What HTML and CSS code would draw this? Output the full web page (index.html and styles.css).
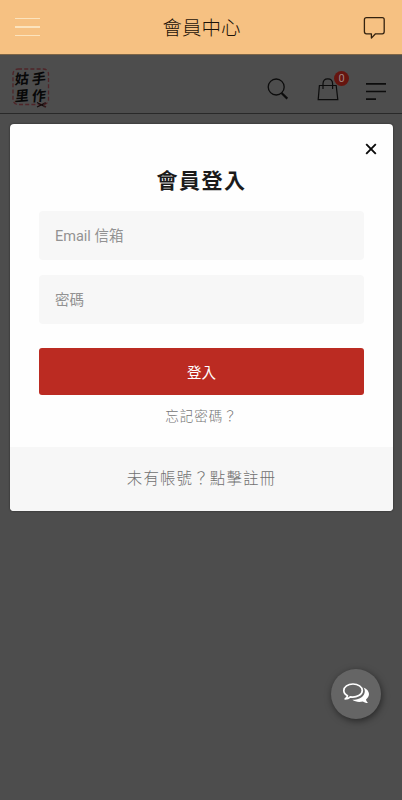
FILE: index.html
```html
<!DOCTYPE html>
<html lang="zh-Hant">
  <head>
    <meta charset="UTF-8" />
    <meta name="viewport" content="width=device-width, initial-scale=1.0" />
    <title>會員中心</title>
    <link rel="stylesheet" href="styles.css">
  </head>
  <body>
    <header class="app-bar">
      <button class="app-menu" aria-label="選單">
        <span></span>
        <span></span>
        <span></span>
      </button>
      <h1>會員中心</h1>
      <button class="app-message" aria-label="訊息">
        <svg width="24" height="24" viewBox="0 0 24 24" fill="none" stroke="#33220f" stroke-width="1.3" stroke-linejoin="round">
          <path d="M4 2.7H19.3Q21.2 2.7 21.2 4.6V16.4Q21.2 18.8 19.3 18.8H12.5L8.4 23.1V18.8H3.5Q1.4 18.8 1.4 16.4V4.8Q1.4 2.7 3.5 2.7Z" />
        </svg>
      </button>
    </header>

    <nav class="site-nav">
      <a class="logo" href="#">
        <svg class="stitch" width="38" height="38" viewBox="0 0 38 38" fill="none">
          <rect x="1" y="1" width="35.5" height="35.5" rx="5" stroke="#4f2529" stroke-width="1.3" stroke-dasharray="4 2.2" />
        </svg>
        <span>姑</span><span>手</span>
        <span>里</span><span>作</span>
        <svg class="scissors" width="12" height="8" viewBox="0 0 12 8" fill="none" stroke="#160a0a">
          <path d="M1 1.5L8 5.2M1 6L8 2.6" stroke-width="1.2" />
          <path d="M8 2.6L10 1.8M8 5.2L10 6" stroke="#32181a" stroke-width="1.8" />
        </svg>
      </a>
      <div class="nav-icons">
        <svg class="search-icon" width="22" height="22" viewBox="0 0 22 22" fill="none" stroke="#0c0c0c">
          <circle cx="9.2" cy="9" r="8" stroke-width="1.3" />
          <path d="M14.5 15L20.3 20.6" stroke-width="2.2" />
        </svg>
        <div class="cart">
          <svg width="22" height="24" viewBox="0 0 22 24" fill="none" stroke="#0c0c0c" stroke-width="1.2">
            <path d="M2.4 8.5H19.2L20.8 22.7H1.2Z" />
            <path d="M6 12V6.8Q6 1.8 10.8 1.8T15.6 6.8V12" />
          </svg>
          <span class="badge">0</span>
        </div>
        <svg class="list-icon" width="22" height="20" viewBox="0 0 22 20" stroke="#0c0c0c" stroke-width="1.7">
          <path d="M1 1.9H21M1 9.5H21M1 17.1H11" />
        </svg>
      </div>
    </nav>

    <main class="overlay">
      <section class="login-modal">
        <div class="modal-body">
          <button class="close" aria-label="關閉">
            <svg width="12" height="12" viewBox="0 0 12 12" stroke="#0a0a0a" stroke-width="1.9">
              <path d="M1.2 1.2L10.8 10.8M10.8 1.2L1.2 10.8" />
            </svg>
          </button>
          <h2>會員登入</h2>
          <form>
            <input type="email" placeholder="Email 信箱" />
            <input type="password" placeholder="密碼" />
            <button type="button" class="submit">登入</button>
          </form>
          <a class="forgot" href="#">忘記密碼？</a>
        </div>
        <a class="register" href="#">未有帳號？點擊註冊</a>
      </section>
    </main>

    <button class="chat" aria-label="聊天">
      <svg width="28" height="24" viewBox="0 0 28 24" fill="none">
        <path d="M21.5 5.5C25 7 27 9.4 27 12.1C27 14.2 25.8 16 24 17.4C24.3 19 25.2 20.2 26.2 21C24.3 21.2 22.2 20.5 20.8 19.5C17 20.5 13 19.8 10.4 17.8C17.5 17.8 22.8 14.2 22.8 9.2C22.8 7.8 22.3 6.6 21.5 5.5Z" fill="#fff" />
        <path d="M11 2C5.9 2 1.8 4.8 1.8 8.5C1.8 10.8 3.2 12.6 5.5 13.8C5.2 15.2 4.3 16.2 3.2 17C5.3 17 7.1 16.1 8.3 14.9C15 15.8 20.3 12.7 20.3 8.5C20.3 4.8 16.1 2 11 2Z" stroke="#fff" stroke-width="1.7" stroke-linejoin="round" />
      </svg>
    </button>
  </body>
</html>
```
FILE: styles.css
```css
* {
  margin: 0;
  padding: 0;
  box-sizing: border-box;
}

body {
  background: #4d4d4d;
  font-family: Roboto, "Noto Sans CJK TC", sans-serif;
  min-height: 100vh;
  overflow: hidden;
}

button {
  border: none;
  background: none;
  font-family: inherit;
  cursor: pointer;
}

a {
  text-decoration: none;
}

svg {
  display: block;
}

.app-bar {
  display: flex;
  align-items: center;
  justify-content: space-between;
  height: 55px;
  padding: 0 15px;
  background: #f6c182;
  border-bottom: 1px solid #7d6547;
}

.app-bar h1 {
  padding-bottom: 2px;
  font-size: 19.5px;
  font-weight: 300;
  color: #1c1208;
}

.app-menu {
  display: flex;
  flex-direction: column;
  gap: 7px;
  width: 25px;
}

.app-menu span {
  height: 1.5px;
  background: #fbe3bd;
}

.app-message {
  width: 25px;
  margin-right: -1px;
}

/* Site navigation, dimmed behind the login box */
.site-nav {
  display: flex;
  align-items: center;
  justify-content: space-between;
  height: 59px;
  padding: 5px 15px 0 12px;
  border-bottom: 1px solid #292929;
}

.logo {
  position: relative;
  display: grid;
  grid-template-columns: 17px 17px;
  grid-template-rows: 17px 17px;
  place-content: center;
  place-items: center;
  width: 38px;
  height: 38px;
  color: #080808;
  font-size: 14px;
  font-weight: 700;
  line-height: 17px;
}

.logo span {
  transform: translate(-1px, 1px) skew(-5deg, -5deg);
}

.stitch {
  position: absolute;
  top: 0;
  left: 0;
}

.scissors {
  position: absolute;
  right: 2px;
  bottom: -3px;
}

.nav-icons {
  display: flex;
  align-items: center;
  padding-top: 4px;
}

.search-icon {
  margin-right: 28px;
}

.cart {
  position: relative;
  margin-right: 26px;
}

.badge {
  position: absolute;
  top: -6px;
  right: -10px;
  width: 15px;
  height: 15px;
  border-radius: 50%;
  background: #66150f;
  color: #a08480;
  font-size: 11px;
  line-height: 15px;
  text-align: center;
}

.list-icon {
  margin-top: 7px;
}

.overlay {
  padding: 10px 9px 0 10px;
}

.login-modal {
  overflow: hidden;
  height: 387px;
  background: #fefefe;
  border-radius: 4px;
  box-shadow: 0 0 2px #222;
}

.modal-body {
  position: relative;
  height: 323px;
  padding: 41px 29px 0;
  text-align: center;
}

.close {
  position: absolute;
  top: 19px;
  right: 16px;
}

.login-modal h2 {
  height: 46px;
  font-size: 21px;
  font-weight: 700;
  line-height: 33px;
  letter-spacing: 1.5px;
  color: #1b1b1b;
}

form {
  display: flex;
  flex-direction: column;
}

input {
  height: 49px;
  margin-bottom: 15px;
  padding: 2px 16px 0;
  border: none;
  border-radius: 4px;
  background: #f7f7f7;
  font-family: inherit;
  font-size: 14.5px;
}

input::placeholder {
  color: #929292;
}

.submit {
  height: 47px;
  margin-top: 9px;
  border-radius: 3px;
  background: #bb2b22;
  color: #fff;
  font-size: 14.5px;
}

.forgot {
  display: block;
  margin-top: 11px;
  color: #757575;
  font-size: 13.5px;
  font-weight: 300;
  line-height: 20px;
  letter-spacing: 1px;
}

.register {
  display: flex;
  align-items: center;
  justify-content: center;
  height: 64px;
  padding-bottom: 5px;
  background: #f7f7f7;
  color: #707070;
  font-size: 15.5px;
  font-weight: 300;
  letter-spacing: 1.1px;
}

.chat {
  position: fixed;
  right: 21px;
  bottom: 81px;
  display: flex;
  align-items: center;
  justify-content: center;
  width: 50px;
  height: 50px;
  border-radius: 50%;
  background: #656565;
  box-shadow: 1px 2px 7px rgba(0, 0, 0, 0.5);
}
```
